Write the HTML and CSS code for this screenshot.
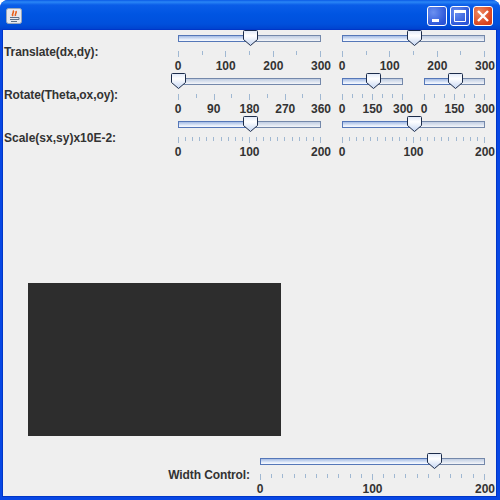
FILE: index.html
```html
<!DOCTYPE html>
<html lang="en">
<head>
    <meta charset="UTF-8">
    <title>Transform</title>
    <link rel="stylesheet" href="styles.css">
</head>
<body>
    <svg class="defs" width="0" height="0">
        <defs>
            <linearGradient id="thumbFill" x1="0" y1="0" x2="0" y2="1">
                <stop offset="0" stop-color="#dfe8f8"/>
                <stop offset="0.35" stop-color="#ffffff"/>
                <stop offset="1" stop-color="#c4d5f2"/>
            </linearGradient>
            <symbol id="thumb" viewBox="0 0 15 16">
                <path d="M1.500.5h12q1 0 1 1v8l-7 6-7-6v-8q0-1 1-1z" fill="url(#thumbFill)" stroke="#1c2c4a"/>
            </symbol>
        </defs>
    </svg>

    <div class="window">
        <div class="titlebar">
            <svg class="app-icon" width="16" height="16" viewBox="0 0 16 16">
                <rect x=".5" y=".5" width="15" height="15" rx="2" fill="#e6e8ee" stroke="#9aa6b8"/>
                <path d="M7 2.500c2 2-2 3 0 5.500M10 3c1 2-1.500 3-.5 5" fill="none" stroke="#e8601a" stroke-width="1.600"/>
                <path d="M4 9.500h7M4 11.500h7M5 13.500h6M11 9.500h2v2h-2" fill="none" stroke="#5c7088"/>
            </svg>
            <div class="win-buttons">
                <div class="win-btn">
                    <svg width="20" height="20" viewBox="0 0 20 20"><rect x="5" y="13" width="7" height="3" fill="#fff"/></svg>
                </div>
                <div class="win-btn">
                    <svg width="20" height="20" viewBox="0 0 20 20"><path d="M4.500 5.500h11v10h-11z" fill="none" stroke="#fff"/><rect x="4" y="4" width="12" height="3" fill="#fff"/></svg>
                </div>
                <div class="win-btn win-close">
                    <svg width="20" height="20" viewBox="0 0 20 20"><path d="M5 5l10 10M15 5L5 15" stroke="#fff" stroke-width="2.400"/></svg>
                </div>
            </div>
        </div>

        <div class="content">
            <div class="row">
                <div class="row-label tight">Translate(dx,dy):</div>
                <div class="slider w143">
                    <div class="track"><div class="fill" style="width:51%"></div><svg class="thumb" style="left:51%"><use href="#thumb"/></svg></div>
                    <div class="ticks"><i></i><i class="m"></i><i></i><i class="m"></i><i></i><i class="m"></i><i></i></div>
                    <div class="nums"><span>0</span><span>100</span><span>200</span><span>300</span></div>
                </div>
                <div class="slider w143">
                    <div class="track"><div class="fill" style="width:51%"></div><svg class="thumb" style="left:51%"><use href="#thumb"/></svg></div>
                    <div class="ticks"><i></i><i class="m"></i><i></i><i class="m"></i><i></i><i class="m"></i><i></i></div>
                    <div class="nums"><span>0</span><span>100</span><span>200</span><span>300</span></div>
                </div>
            </div>

            <div class="row">
                <div class="row-label tight">Rotate(Theta,ox,oy):</div>
                <div class="slider w143">
                    <div class="track"><div class="fill" style="width:0%"></div><svg class="thumb" style="left:0%"><use href="#thumb"/></svg></div>
                    <div class="ticks"><i></i><i class="m"></i><i></i><i class="m"></i><i></i><i class="m"></i><i></i><i class="m"></i><i></i></div>
                    <div class="nums"><span>0</span><span>90</span><span>180</span><span>270</span><span>360</span></div>
                </div>
                <div class="slider w61">
                    <div class="track"><div class="fill" style="width:52.500%"></div><svg class="thumb" style="left:52.500%"><use href="#thumb"/></svg></div>
                    <div class="ticks"><i></i><i class="m"></i><i class="m"></i><i></i><i class="m"></i><i class="m"></i><i></i></div>
                    <div class="nums"><span>0</span><span>150</span><span>300</span></div>
                </div>
                <div class="slider w61">
                    <div class="track"><div class="fill" style="width:52.500%"></div><svg class="thumb" style="left:52.500%"><use href="#thumb"/></svg></div>
                    <div class="ticks"><i></i><i class="m"></i><i class="m"></i><i></i><i class="m"></i><i class="m"></i><i></i></div>
                    <div class="nums"><span>0</span><span>150</span><span>300</span></div>
                </div>
            </div>

            <div class="row">
                <div class="row-label">Scale(sx,sy)x10E-2:</div>
                <div class="slider w143">
                    <div class="track"><div class="fill" style="width:51%"></div><svg class="thumb" style="left:51%"><use href="#thumb"/></svg></div>
                    <div class="ticks"><i></i><i class="m"></i><i class="m"></i><i class="m"></i><i class="m"></i><i class="m"></i><i class="m"></i><i class="m"></i><i class="m"></i><i class="m"></i><i></i><i class="m"></i><i class="m"></i><i class="m"></i><i class="m"></i><i class="m"></i><i class="m"></i><i class="m"></i><i class="m"></i><i class="m"></i><i></i></div>
                    <div class="nums"><span>0</span><span>100</span><span>200</span></div>
                </div>
                <div class="slider w143">
                    <div class="track"><div class="fill" style="width:51%"></div><svg class="thumb" style="left:51%"><use href="#thumb"/></svg></div>
                    <div class="ticks"><i></i><i class="m"></i><i class="m"></i><i class="m"></i><i class="m"></i><i class="m"></i><i class="m"></i><i class="m"></i><i class="m"></i><i class="m"></i><i></i><i class="m"></i><i class="m"></i><i class="m"></i><i class="m"></i><i class="m"></i><i class="m"></i><i class="m"></i><i class="m"></i><i class="m"></i><i></i></div>
                    <div class="nums"><span>0</span><span>100</span><span>200</span></div>
                </div>
            </div>

            <div class="canvas">
                <div class="shape"></div>
            </div>

            <div class="row row-bottom">
                <div class="row-label tight">Width Control:</div>
                <div class="slider w225">
                    <div class="track"><div class="fill" style="width:78%"></div><svg class="thumb" style="left:78%"><use href="#thumb"/></svg></div>
                    <div class="ticks"><i></i><i class="m"></i><i class="m"></i><i class="m"></i><i class="m"></i><i class="m"></i><i class="m"></i><i class="m"></i><i class="m"></i><i class="m"></i><i></i><i class="m"></i><i class="m"></i><i class="m"></i><i class="m"></i><i class="m"></i><i class="m"></i><i class="m"></i><i class="m"></i><i class="m"></i><i></i></div>
                    <div class="nums"><span>0</span><span>100</span><span>200</span></div>
                </div>
            </div>
        </div>
    </div>
</body>
</html>
```

FILE: styles.css
```css
html, body { margin: 0; padding: 0; background: #fff;}
body { font-family: "Liberation Sans", Arial, sans-serif; font-size: 12px; font-weight: bold; color: #333;}
.defs { position: absolute;}

.window {
    width: 500px; height: 500px; box-sizing: border-box;
    display: flex; flex-direction: column;
    background: #0847e4; border-radius: 8px 8px 0 0; overflow: hidden;
}

.titlebar {
    height: 30px; flex: none; display: flex; align-items: center;
    padding: 0 7px 0 6px;
    background: linear-gradient(#0a5ae6 0, #2a86f6 2px, #0a5de8 5px, #0055e2 14px, #0050dc 24px, #0040cc 30px);
}
.app-icon { display: block; margin-top: 2px;}
.win-buttons { margin-left: auto; display: flex; gap: 3px; margin-top: 2px;}
.win-btn {
    width: 20px; height: 20px; box-sizing: border-box;
    border: 1px solid #fff; border-radius: 3px;
    background: radial-gradient(circle at 30% 30%, #6b90f0, #2a55d8 75%);
    overflow: hidden;
}
.win-btn svg { display: block; margin: -1px;}
.win-close { background: radial-gradient(circle at 30% 30%, #ee8a60, #d8401c 75%);}

.content {
    flex: 1; margin: 0 4px 4px 3px; background: #efefef;
    box-shadow: 0 0 0 1px #0036c8;
    display: flex; flex-direction: column;
}

.row { display: flex; height: 43px; flex: none; gap: 21px; padding-top: 5px; box-sizing: border-box;}
.row-label { width: 153px; padding: 10px 0 0 1px; white-space: nowrap;}
.tight { letter-spacing: -0.1px;}

.slider { flex: none;}
.w143 { width: 143px;}
.w61 { width: 61px;}
.w225 { width: 225px;}

.track {
    position: relative; height: 7px; box-sizing: border-box;
    border: 1px solid #7488aa;
    background: linear-gradient(#c0cde2, #f4f6fa);
}
.fill {
    height: 100%;
    background: linear-gradient(#a4bbe4, #e6eefb 70%, #f8faff);
    box-shadow: 0 0 0 1px #5577b8;
}
.thumb { position: absolute; top: -6px; width: 15px; height: 16px; margin-left: -8px;}

.ticks { display: flex; justify-content: space-between; align-items: flex-start; margin-top: 9px; height: 6px;}
.ticks i { display: block; width: 1px; height: 6px; background: #a0b8d2;}
.ticks i.m { height: 4px;}

.nums { display: flex; justify-content: space-between; margin-top: 2px; line-height: 14px;}
.nums span { width: 0; display: flex; justify-content: center;}

.canvas { flex: 1; padding: 124px 0 0 25px;}
.shape { width: 253px; height: 153px; background: #2d2d2d;}

.row-bottom .row-label { width: 247px; padding-left: 0; text-align: right; margin-right: -11px;}
```
